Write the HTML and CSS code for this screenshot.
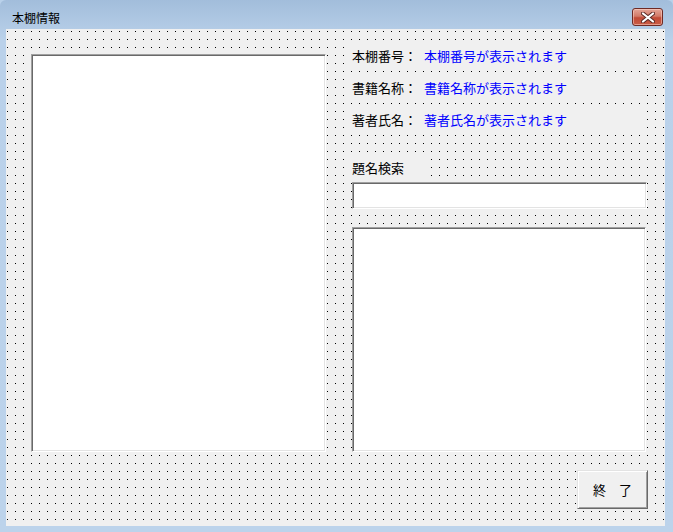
FILE: index.html
```html
<!DOCTYPE html>
<html lang="ja">
<head>
<meta charset="utf-8">
<title>本棚情報</title>
<link rel="stylesheet" href="styles.css">
</head>
<body>
<div class="window">
  <div class="titlebar">
    <span class="title">本棚情報</span>
    <div class="close">
      <svg width="14" height="11" viewBox="0 0 14 11">
        <path d="M2 1.5 L12 9.5 M12 1.5 L2 9.5" stroke="#5a2a26" stroke-width="4" stroke-linecap="round"/>
        <path d="M2 1.5 L12 9.5 M12 1.5 L2 9.5" stroke="#ffffff" stroke-width="2.2" stroke-linecap="round"/>
      </svg>
    </div>
  </div>
  <div class="client">
    <div class="main">
      <div class="listbox left-list"></div>
      <div class="right-col">
        <div class="info-row"><span class="lbl">本棚番号：</span><span class="val">本棚番号が表示されます</span></div>
        <div class="info-row"><span class="lbl">書籍名称：</span><span class="val">書籍名称が表示されます</span></div>
        <div class="info-row"><span class="lbl">著者氏名：</span><span class="val">著者氏名が表示されます</span></div>
        <div class="search-label">題名検索</div>
        <div class="textbox"></div>
        <div class="listbox right-list"></div>
      </div>
    </div>
    <div class="footer">
      <div class="button">終　了</div>
    </div>
  </div>
</div>
</body>
</html>
```
FILE: styles.css
```css
html, body {
  margin: 0;
  padding: 0;
  background: #b9d1ea;
}
.window {
  width: 673px;
  height: 532px;
  box-sizing: border-box;
  background: linear-gradient(#a2bddb 0px, #bad1ea 40px, #bcd3eb 100%);
  border-radius: 6px 6px 0 0;
  display: flex;
  flex-direction: column;
  font-family: "Noto Sans CJK JP", "Noto Sans", sans-serif;
  color: #000;
  overflow: hidden;
}
.titlebar {
  height: 29px;
  box-sizing: border-box;
  padding: 8px 10px 0 12px;
  display: flex;
  justify-content: space-between;
  align-items: flex-start;
}
.title {
  font-size: 12px;
  line-height: 18px;
  margin-top: 1px;
}
.close {
  width: 31px;
  height: 18px;
  box-sizing: border-box;
  border: 1px solid #6e2a24;
  border-radius: 3px;
  background: linear-gradient(#e4a597 0%, #d27a68 45%, #c14a36 55%, #c95c45 100%);
  box-shadow: inset 0 0 0 1px rgba(255, 220, 210, 0.5);
  display: flex;
  align-items: center;
  justify-content: center;
}
.close svg { display: block; }
.client {
  width: 659px;
  height: 497px;
  margin-left: 6px;
  box-sizing: border-box;
  background-color: #f0f0f0;
  background-image: conic-gradient(from 270deg at 1px 1px, #000 25%, transparent 0);
  background-size: 8px 8px;
  background-position: 1px 2px;
  display: flex;
  flex-direction: column;
}
.main {
  display: flex;
  align-items: flex-start;
  margin-top: 11px;
}
.listbox, .textbox {
  background: #fff;
  box-sizing: border-box;
  border: 1px solid;
  border-color: #a0a0a0 #ffffff #ffffff #a0a0a0;
  box-shadow: inset 1px 1px 0 #696969, inset -1px -1px 0 #e3e3e3;
}
.left-list {
  width: 295px;
  height: 398px;
  margin-left: 25px;
  margin-top: 14px;
}
.right-col {
  width: 301px;
  margin-left: 20px;
  display: flex;
  flex-direction: column;
}
.info-row {
  width: 299px;
  height: 31px;
  margin-bottom: 1px;
  padding-left: 6px;
  box-sizing: border-box;
  background: #f0f0f0;
  display: flex;
  align-items: center;
  font-size: 13px;
  line-height: 16px;
}
.lbl { width: 72px; flex: none; }
.val { color: #0000ff; }
.search-label {
  width: 72px;
  height: 20px;
  margin-top: 22px;
  padding-left: 6px;
  background: #f0f0f0;
  font-size: 13px;
  line-height: 20px;
  box-sizing: content-box;
}
.textbox {
  width: 295px;
  height: 27px;
  margin-top: 4px;
  margin-left: 6px;
}
.right-list {
  width: 294px;
  height: 225px;
  margin-top: 18px;
  margin-left: 6px;
}
.footer {
  display: flex;
  justify-content: flex-end;
  margin-top: 18px;
  padding-right: 17px;
}
.button {
  width: 71px;
  height: 39px;
  box-sizing: border-box;
  background: #f0f0f0;
  border: 1px solid;
  border-color: #e3e3e3 #696969 #696969 #e3e3e3;
  box-shadow: inset 1px 1px 0 #ffffff, inset -1px -1px 0 #a0a0a0;
  display: flex;
  align-items: center;
  justify-content: center;
  font-size: 13px;
  line-height: 16px;
}
```
